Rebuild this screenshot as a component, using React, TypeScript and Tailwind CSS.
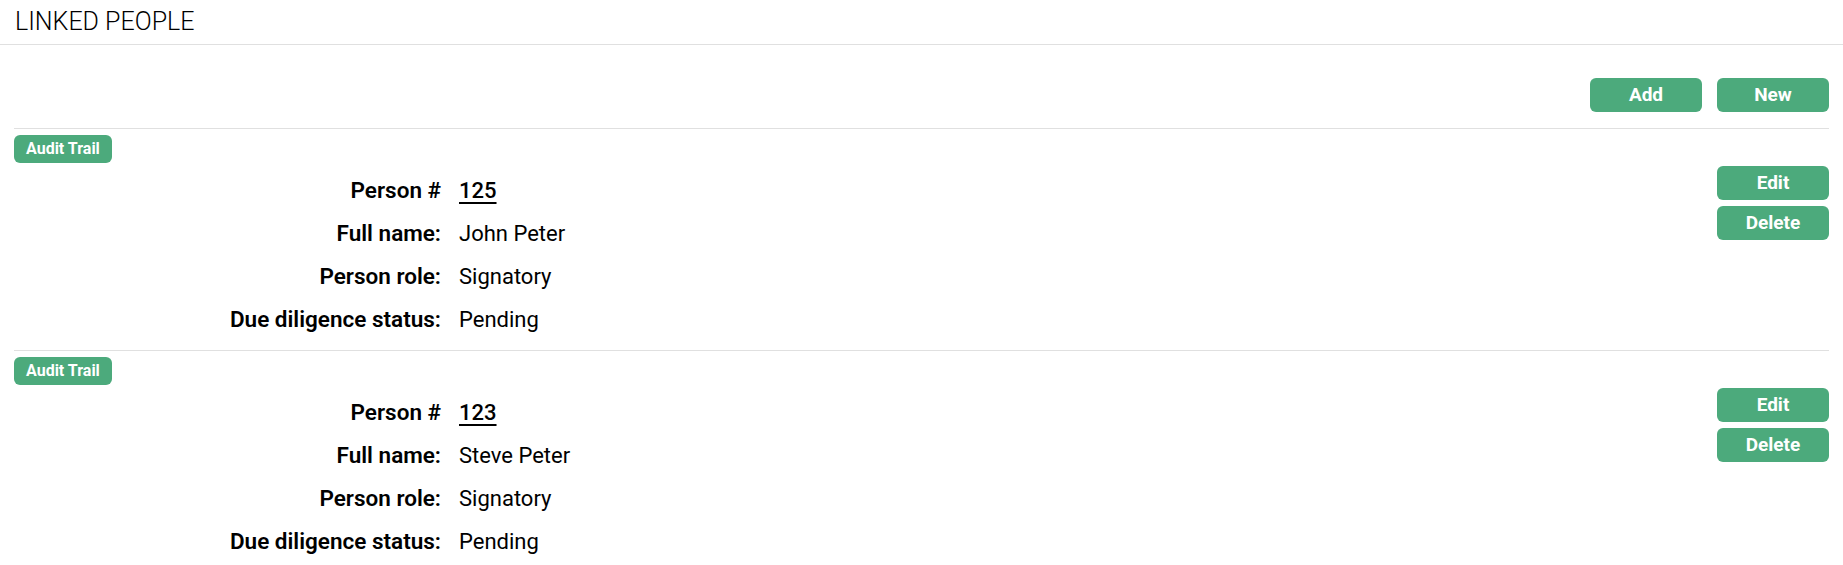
import React from 'react';

interface LinkedPerson {
  id: number;
  fullName: string;
  role: string;
  status: string;
}

const people: LinkedPerson[] = [
  { id: 125, fullName: 'John Peter', role: 'Signatory', status: 'Pending' },
  { id: 123, fullName: 'Steve Peter', role: 'Signatory', status: 'Pending' },
];

function GreenButton({ children }: { children: React.ReactNode }) {
  return (
    <button className="flex h-[34px] w-[112px] items-center justify-center rounded-[6px] bg-[#4caa7c] text-[19px] font-bold text-white">
      {children}
    </button>
  );
}

function Field({ label, children }: { label: string; children: React.ReactNode }) {
  return (
    <>
      <div className="text-right text-[22.5px] font-semibold leading-[43px] text-black">{label}</div>
      <div className="text-[22px] leading-[43px] text-black">{children}</div>
    </>
  );
}

function PersonCard({ person }: { person: LinkedPerson }) {
  return (
    <div className="border-t border-[#e0e0e0] pt-[6px] pb-[9px]">
      <span className="inline-flex h-[28px] items-center rounded-[6px] bg-[#4caa7c] px-[12px] text-[16px] font-bold text-white">
        Audit Trail
      </span>
      <div className="mt-[3px] flex items-start justify-between">
        <div className="grid grid-cols-[427px_1fr] gap-x-[18px] pt-[3px]">
          <Field label="Person #">
            <a href="#" className="font-medium underline decoration-2 underline-offset-[4px]">
              {person.id}
            </a>
          </Field>
          <Field label="Full name:">{person.fullName}</Field>
          <Field label="Person role:">{person.role}</Field>
          <Field label="Due diligence status:">{person.status}</Field>
        </div>
        <div className="flex flex-col gap-[6px]">
          <GreenButton>Edit</GreenButton>
          <GreenButton>Delete</GreenButton>
        </div>
      </div>
    </div>
  );
}

export default function App() {
  return (
    <div className="min-h-screen bg-white font-['Roboto',sans-serif] text-black">
      <div className="h-[45px] border-b border-[#e0e0e0] px-[15px]">
        <h2 className="pt-[7px] text-[25px] font-light leading-[30px] tracking-normal">LINKED PEOPLE</h2>
      </div>
      <div className="px-[14px]">
        <div className="flex justify-end gap-[15px] pt-[33px] pb-[16px]">
          <GreenButton>Add</GreenButton>
          <GreenButton>New</GreenButton>
        </div>
        {people.map((p) => (
          <PersonCard key={p.id} person={p} />
        ))}
      </div>
    </div>
  );
}
